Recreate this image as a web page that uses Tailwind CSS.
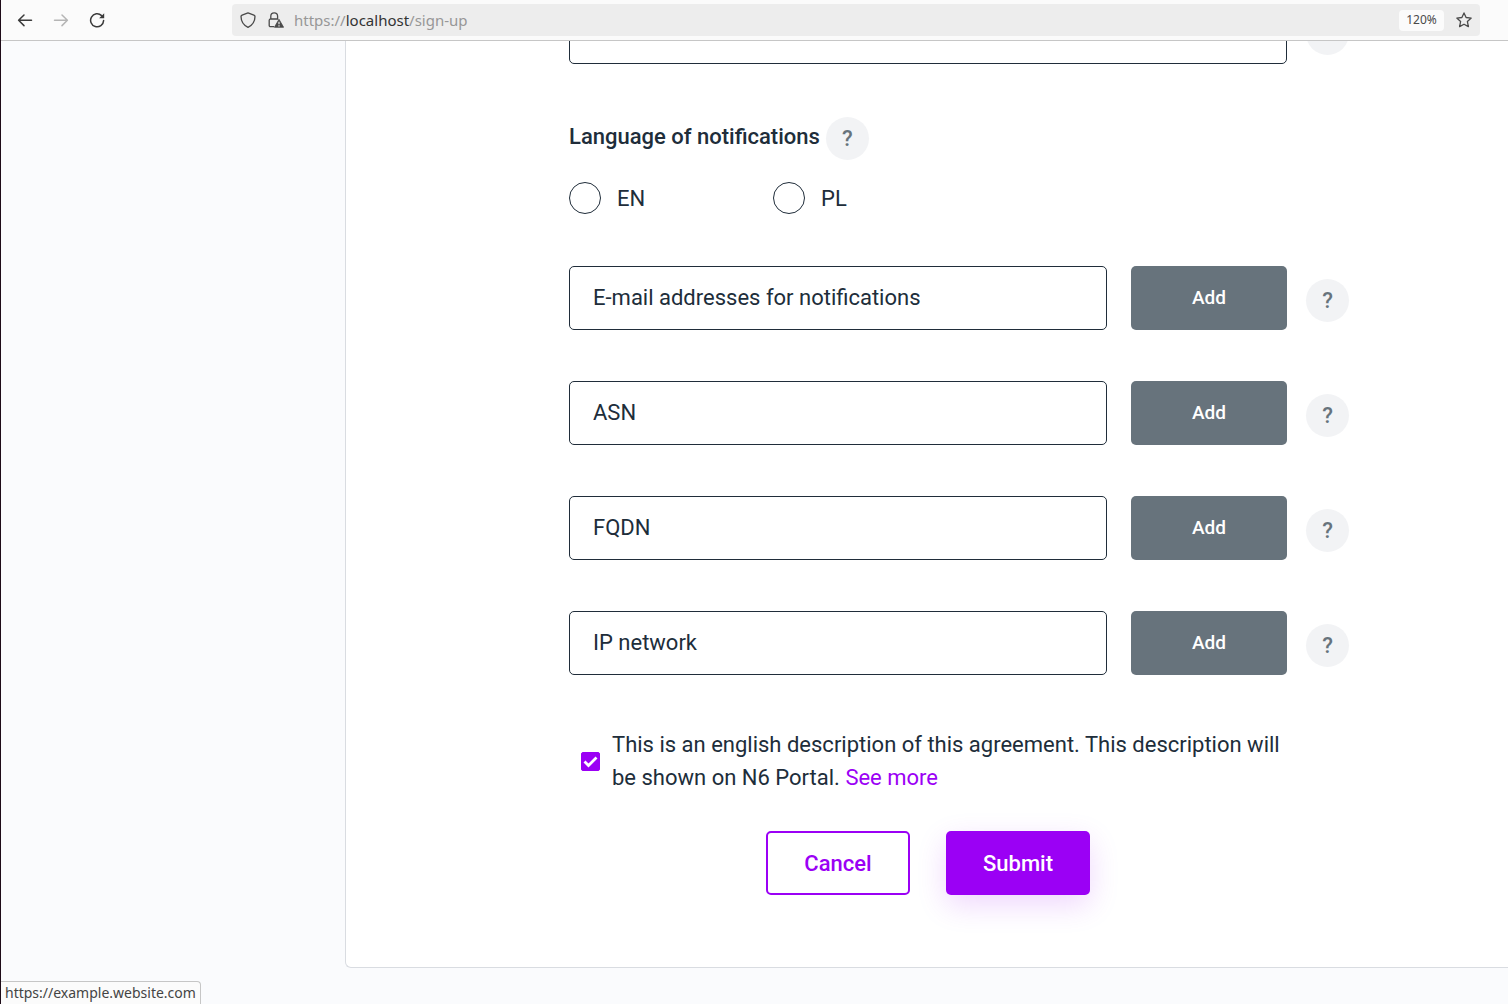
<!DOCTYPE html>
<html lang="en">
<head>
<meta charset="utf-8">
<meta name="viewport" content="width=device-width, initial-scale=1">
<title>Sign up</title>
<script src="https://cdn.jsdelivr.net/npm/@tailwindcss/browser@4"></script>
</head>
<body class="flex h-screen flex-col overflow-hidden border-l border-[#1d0b18] bg-[#fafbfd] font-['Roboto',sans-serif] text-[#202d3a]">

  <!-- Browser toolbar -->
  <header class="flex h-[41px] shrink-0 items-center border-b border-[#c6c6c6] bg-[#fbfbfb] pr-7 font-['Noto_Sans',sans-serif]">
    <nav class="flex w-[231px] shrink-0 items-center gap-5 pl-4" aria-label="History">
      <button type="button" aria-label="Back" class="text-[#3a3a3a]">
        <svg class="size-4" viewBox="0 0 16 16" fill="none" stroke="currentColor" stroke-width="1.5" stroke-linecap="round" stroke-linejoin="round"><path d="M14.5 8.3H1.8M7 3L1.6 8.3 7 13.6"/></svg>
      </button>
      <button type="button" aria-label="Forward" class="text-[#b5b5b5]" disabled>
        <svg class="size-4" viewBox="0 0 16 16" fill="none" stroke="currentColor" stroke-width="1.5" stroke-linecap="round" stroke-linejoin="round"><path d="M1.5 8.3h12.7M9 3l5.4 5.3L9 13.6"/></svg>
      </button>
      <button type="button" aria-label="Reload" class="text-[#3a3a3a]">
        <svg class="size-4" viewBox="0 0 16 16" fill="none" stroke="currentColor" stroke-width="1.5" stroke-linecap="round"><path d="M12.6 3.6A6.5 6.5 0 1 0 14.6 8.6"/><path d="M15.2 1.2v5.1h-5.1z" fill="currentColor" stroke="none"/></svg>
      </button>
    </nav>
    <div class="flex h-8 flex-1 items-center rounded bg-[#ededed] pr-2 pl-2">
      <svg class="size-4 text-[#4a4a4a]" viewBox="0 0 16 16" fill="none" stroke="currentColor" stroke-width="1.3" stroke-linejoin="round"><path d="M8 .9l5.9 2.2c.7.3 1.1.8 1.1 1.5C14.900 9.500 12.600 13.300 8 15.300 3.400 13.300 1.100 9.500 1 4.600c0-.7.4-1.200 1.100-1.500z"/></svg>
      <svg class="ml-3 size-4 text-[#4a4a4a]" viewBox="0 0 16 16" fill="none" stroke="currentColor" stroke-width="1.3"><path d="M6 14.700H2.500a1.300 1.300 0 0 1-1.300-1.300V8.300A1.300 1.300 0 0 1 2.500 7h7.800M2.800 7V4.200a3.400 3.400 0 0 1 6.800 0V7"/><path d="M11 7.300L15.600 15.300H6.400z" fill="currentColor" stroke="currentColor" stroke-width=".8" stroke-linejoin="round"/><path d="M11 9.800v2.500M11 13.200v1.200" stroke="#ededed" stroke-width="1.200"/></svg>
      <p class="ml-2.5 flex-1 text-[15px] text-[#979797]">https://<span class="text-[#333]">localhost</span>/sign-up</p>
      <button type="button" class="h-[21px] w-[45px] rounded bg-[#fbfbfb] text-xs text-[#4a4a4a]">120%</button>
      <button type="button" aria-label="Bookmark this page" class="ml-3 text-[#4a4a4a]">
        <svg class="size-4" viewBox="0 0 16 16" fill="none" stroke="currentColor" stroke-width="1.3" stroke-linejoin="round"><path d="M8 .9l2.100 4.600 5.100.6-3.800 3.500 1 5L8 12.200l-4.400 2.400 1-5L.8 6.100l5.100-.6z"/></svg>
      </button>
    </div>
  </header>

  <main class="flex flex-1 items-start overflow-hidden pl-[344px]">
    <section class="-mt-[41px] flex-1 rounded-bl-md border-b border-l border-[#d9dce1] bg-white pb-18 pl-[223px]">
      <form class="max-w-[780px]">

        <div class="flex items-start">
          <input type="text" aria-label="Additional information" class="h-16 min-w-0 flex-1 rounded-[5px] border border-[#202d3a] px-[23px] text-[22px]">
          <button type="button" class="mt-3 ml-[19px] size-[43px] rounded-full bg-[#f2f3f5] text-[22px] font-medium text-[#67737c]" aria-label="Help">?</button>
        </div>

        <fieldset class="mt-[53px]">
          <legend class="flex items-center gap-1.5 text-[22px] font-medium">
            <span class="-mt-1">Language of notifications</span>
            <button type="button" class="size-[43px] rounded-full bg-[#f2f3f5] text-[22px] font-medium text-[#67737c]" aria-label="Help">?</button>
          </legend>
          <div class="mt-[22px] flex text-[22px]">
            <label class="flex h-8 w-51 items-center gap-4"><input type="radio" name="lang" value="en" class="size-8 appearance-none rounded-full border border-[#202d3a] checked:border-8 checked:border-[#9b00f5]">EN</label>
            <label class="flex h-8 w-51 items-center gap-4"><input type="radio" name="lang" value="pl" class="size-8 appearance-none rounded-full border border-[#202d3a] checked:border-8 checked:border-[#9b00f5]">PL</label>
          </div>
        </fieldset>

        <div class="mt-[52px] flex flex-col gap-[51px]">
          <div class="flex items-start">
            <input type="text" aria-label="E-mail addresses for notifications" placeholder="E-mail addresses for notifications" class="h-16 min-w-0 flex-1 rounded-[5px] border border-[#202d3a] px-[23px] pb-0.5 text-[22px] placeholder:text-[#202d3a]">
            <button type="button" class="ml-6 h-16 w-39 rounded-[5px] bg-[#67737c] text-[19px] font-medium text-white">Add</button>
            <button type="button" class="mt-[13px] ml-[19px] size-[43px] rounded-full bg-[#f2f3f5] text-[22px] font-medium text-[#67737c]" aria-label="Help">?</button>
          </div>
          <div class="flex items-start">
            <input type="text" aria-label="ASN" placeholder="ASN" class="h-16 min-w-0 flex-1 rounded-[5px] border border-[#202d3a] px-[23px] pb-0.5 text-[22px] placeholder:text-[#202d3a]">
            <button type="button" class="ml-6 h-16 w-39 rounded-[5px] bg-[#67737c] text-[19px] font-medium text-white">Add</button>
            <button type="button" class="mt-[13px] ml-[19px] size-[43px] rounded-full bg-[#f2f3f5] text-[22px] font-medium text-[#67737c]" aria-label="Help">?</button>
          </div>
          <div class="flex items-start">
            <input type="text" aria-label="FQDN" placeholder="FQDN" class="h-16 min-w-0 flex-1 rounded-[5px] border border-[#202d3a] px-[23px] pb-0.5 text-[22px] placeholder:text-[#202d3a]">
            <button type="button" class="ml-6 h-16 w-39 rounded-[5px] bg-[#67737c] text-[19px] font-medium text-white">Add</button>
            <button type="button" class="mt-[13px] ml-[19px] size-[43px] rounded-full bg-[#f2f3f5] text-[22px] font-medium text-[#67737c]" aria-label="Help">?</button>
          </div>
          <div class="flex items-start">
            <input type="text" aria-label="IP network" placeholder="IP network" class="h-16 min-w-0 flex-1 rounded-[5px] border border-[#202d3a] px-[23px] pb-0.5 text-[22px] placeholder:text-[#202d3a]">
            <button type="button" class="ml-6 h-16 w-39 rounded-[5px] bg-[#67737c] text-[19px] font-medium text-white">Add</button>
            <button type="button" class="mt-[13px] ml-[19px] size-[43px] rounded-full bg-[#f2f3f5] text-[22px] font-medium text-[#67737c]" aria-label="Help">?</button>
          </div>
        </div>

        <div class="mt-[53px] mr-[62px] flex items-center gap-3 pl-3">
          <span class="grid size-[19px] shrink-0">
            <input id="agreement" type="checkbox" checked class="peer col-start-1 row-start-1 size-[19px] appearance-none rounded-xs border border-[#9b00f5] checked:bg-[#9b00f5]">
            <svg class="pointer-events-none invisible col-start-1 row-start-1 size-[19px] peer-checked:visible" viewBox="0 0 19 19" fill="none" stroke="#fff" stroke-width="2.800"><path d="M3.500 9.500l4 4 8-8"/></svg>
          </span>
          <p class="text-[22px] leading-[33px]"><label for="agreement">This is an english description of this agreement. This description will be shown on N6 Portal.</label> <a href="#" class="text-[#9b00f5]">See more</a></p>
        </div>

        <div class="mt-[37px] mr-[62px] flex justify-center gap-9">
          <button type="button" class="h-16 w-36 rounded-[5px] border-2 border-[#9b00f5] bg-white text-[22px] font-medium text-[#9b00f5]">Cancel</button>
          <button type="submit" class="h-16 w-36 rounded-[5px] bg-[#9b00f5] text-[22px] font-medium text-white shadow-[0_10px_30px_rgba(155,0,245,0.16)]">Submit</button>
        </div>
      </form>
    </section>
  </main>

  <!-- Link address preview -->
  <div class="fixed bottom-0 left-px flex h-[23px] items-center rounded-tr border-t border-r border-[#c6c6c6] bg-[#fbfbfb] px-1 font-['Noto_Sans',sans-serif] text-sm text-[#444]">https://example.website.com</div>
</body>
</html>
